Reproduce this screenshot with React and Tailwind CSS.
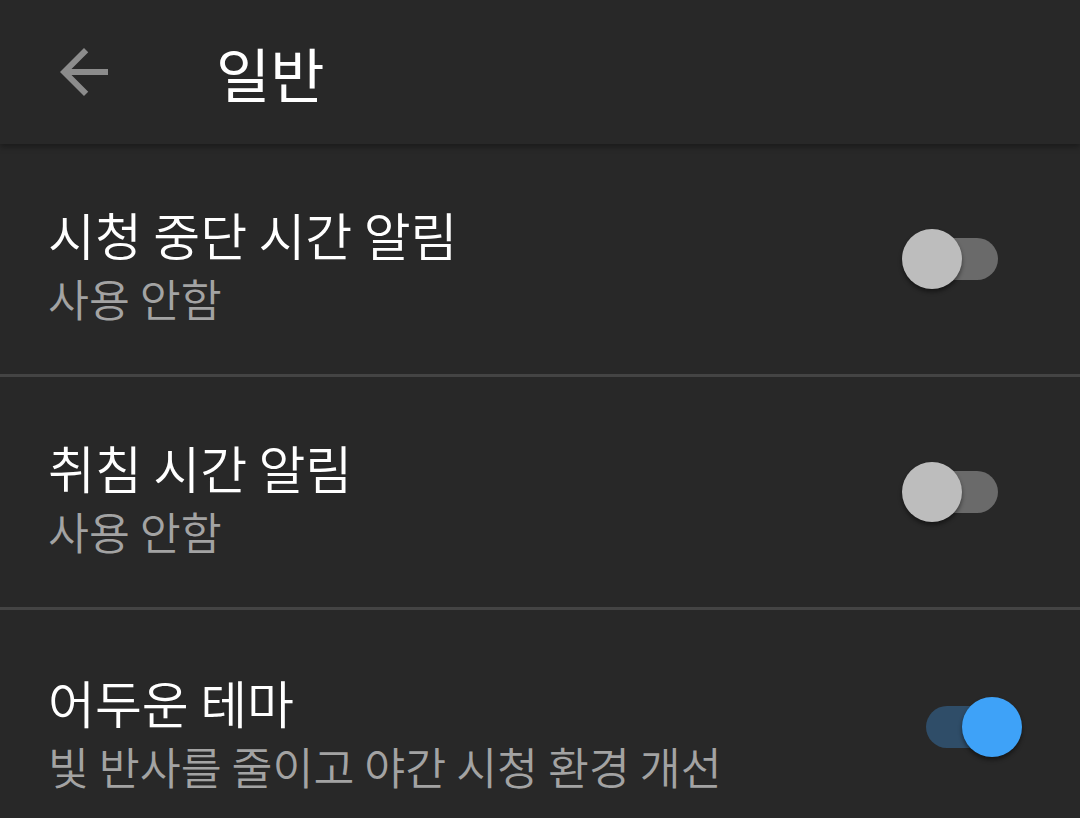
import React from 'react';

const font = { fontFamily: '"Noto Sans CJK KR", "Noto Sans", sans-serif' };

const Toggle = ({ on = false, className = '' }) => {
  if (on) {
    return (
      <div className={`relative h-[60px] w-[96px] flex items-center ${className}`}>
        <div className="h-[42px] w-[84px] rounded-full bg-[#2f4d68]" />
        <div className="absolute right-0 top-0 h-[60px] w-[60px] rounded-full bg-[#3ea2f8] shadow-[0_3px_4px_rgba(0,0,0,0.45)]" />
      </div>
    );
  }
  return (
    <div className={`relative h-[60px] w-[96px] flex items-center justify-end ${className}`}>
      <div className="h-[42px] w-[84px] rounded-full bg-[#6a6a6a]" />
      <div className="absolute left-0 top-0 h-[60px] w-[60px] rounded-full bg-[#bdbdbd] shadow-[0_3px_4px_rgba(0,0,0,0.45)]" />
    </div>
  );
};

const SettingRow = ({ title, subtitle, on, toggleClass, divider = true }) => (
  <div
    className={`flex h-[233px] items-center justify-between pl-12 ${
      divider ? 'border-b-[3px] border-[#444444]' : ''
    }`}
  >
    <div className="mt-[14px] flex flex-col">
      <span className="text-[51px] font-[350] leading-[64px] text-white">{title}</span>
      <span className="text-[44.5px] font-[350] leading-[64px] text-[#a3a3a3]">{subtitle}</span>
    </div>
    <Toggle on={on} className={toggleClass} />
  </div>
);

export default function App() {
  return (
    <div className="h-[818px] w-[1080px] overflow-hidden bg-[#282828]" style={font}>
      <header className="relative z-10 flex h-[144px] items-center bg-[#282828] shadow-[0_3px_6px_rgba(0,0,0,0.35)]">
        <button className="ml-12 flex h-[72px] w-[72px] items-center justify-center">
          <svg viewBox="0 0 24 24" className="h-[72px] w-[72px]" fill="#8c8c8c">
            <path d="M20 11H7.83l5.59-5.59L12 4l-8 8 8 8 1.41-1.41L7.83 13H20v-2z" />
          </svg>
        </button>
        <h1 className="ml-[96px] text-[59px] font-normal leading-none text-white">일반</h1>
      </header>

      <main className="flex flex-col">
        <SettingRow title="시청 중단 시간 알림" subtitle="사용 안함" toggleClass="mr-[82px]" />
        <SettingRow title="취침 시간 알림" subtitle="사용 안함" toggleClass="mr-[82px]" />
        <SettingRow
          title="어두운 테마"
          subtitle="빛 반사를 줄이고 야간 시청 환경 개선"
          on
          toggleClass="mr-[58px]"
          divider={false}
        />
      </main>
    </div>
  );
}
